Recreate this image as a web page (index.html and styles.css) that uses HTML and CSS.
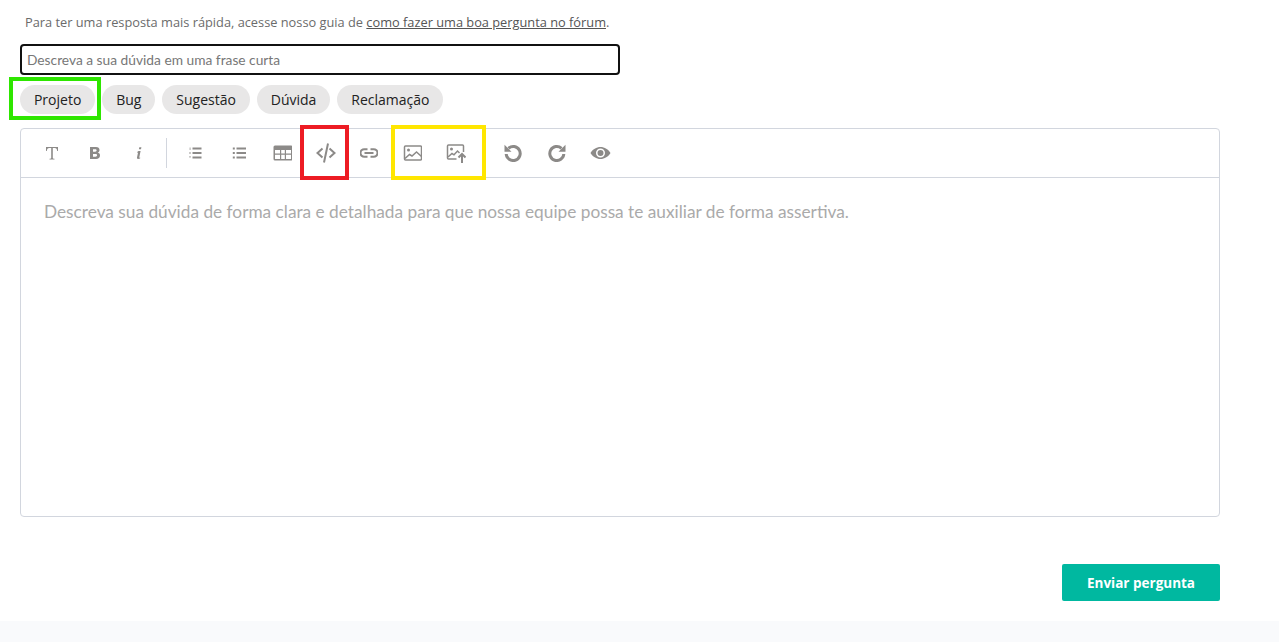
FILE: index.html
```html
<!DOCTYPE html>
<html lang="pt-BR">
<head>
<meta charset="utf-8">
<title>Enviar pergunta</title>
<link rel="stylesheet" href="styles.css">
</head>
<body>
<main class="page">
  <p class="intro">Para ter uma resposta mais rápida, acesse nosso guia de <a href="#">como fazer uma boa pergunta no fórum</a>.</p>
  <input class="title-input" type="text" placeholder="Descreva a sua dúvida em uma frase curta">
  <div class="chips">
    <button class="chip">Projeto</button>
    <button class="chip">Bug</button>
    <button class="chip">Sugestão</button>
    <button class="chip">Dúvida</button>
    <button class="chip">Reclamação</button>
  </div>
  <section class="editor">
    <div class="toolbar">
      <button class="tool"><svg width="16" height="16" viewBox="0 0 16 16"><path class="fill" d="M2 2h12v4h-.8c-.2-1.600-.8-2.900-2.400-2.900H8.800v9.700c0 .8.500 1 1.700 1v.7H5.500v-.7c1.200 0 1.700-.2 1.700-1V3.100H5.200C3.600 3.100 3 4.400 2.800 6H2z"/></svg></button>
      <button class="tool"><svg width="16" height="16" viewBox="0 0 16 16"><path class="fill" fill-rule="evenodd" d="M3 2h6c2.300 0 3.500 1.200 3.500 3 0 1.300-.7 2.200-1.800 2.600 1.500.4 2.300 1.400 2.300 2.900 0 2.200-1.500 3.500-4 3.500H3zm3 2.300v2.400h2.200c.9 0 1.400-.5 1.400-1.200s-.5-1.200-1.400-1.200zm0 4.600v2.800h2.500c1 0 1.600-.5 1.600-1.400s-.6-1.400-1.600-1.400z"/></svg></button>
      <button class="tool"><svg width="16" height="16" viewBox="0 0 16 16"><path class="fill" d="M8.300 2.300h2.100l-.4 2H7.900zM7.500 6h2.100l-1.300 6.200c-.1.500.2.600.9.400l-.1.900c-.8.300-1.400.4-2 .4-.9 0-1.300-.5-1.100-1.400l1-4.800-.9-.2.100-.5z"/></svg></button>
      <span class="divider"></span>
      <button class="tool"><svg width="16" height="16" viewBox="0 0 16 16"><path class="fill" d="M5.500 2.500h9v2h-9zm0 4.500h9v2h-9zm0 4.500h9v2h-9z"/><path class="fill" opacity=".6" d="M2.500 2.500h1.200v2.400H2.500zM2 7h2v.8H2zm0 1.300h2v.8H2zm0 3h2v.6H2zm0 1.100h2v.7H2z"/></svg></button>
      <button class="tool"><svg width="16" height="16" viewBox="0 0 16 16"><path class="fill" d="M5.500 2.500H15v2H5.500zm0 4.500H15v2H5.500zm0 4.500H15v2H5.500z"/><rect class="fill" x="1.800" y="2.500" width="2" height="2"/><rect class="fill" x="1.800" y="7" width="2" height="2"/><rect class="fill" x="1.800" y="11.500" width="2" height="2"/></svg></button>
      <button class="tool"><svg width="19" height="16" viewBox="-.5 0 19 16"><path class="fill" fill-rule="evenodd" d="M1.500.5h16a1.500 1.500 0 0 1 1.500 1.500v12a1.500 1.500 0 0 1-1.500 1.500h-16A1.500 1.500 0 0 1 0 14V2A1.500 1.500 0 0 1 1.500.5zM1.500 5v3.500h5V5zm6.200 0v3.500h3.600V5zm4.800 0v3.500h5V5zM1.500 9.700V14h5V9.700zm6.200 0V14h3.600V9.700zm4.800 0V14h5V9.700z"/></svg></button>
      <button class="tool"><svg width="20" height="20" viewBox="0 0 20 20"><path class="line" d="M6.500 5.500 1.500 10l5 4.500M13.500 5.500l5 4.500-5 4.500M12 .5 8 19.500"/></svg></button>
      <button class="tool"><svg width="18" height="10" viewBox="0 0 18 10"><path class="line" d="M7.500 1.200H4.300a3.800 3.800 0 0 0 0 7.600h3.200M10.500 1.200h3.200a3.800 3.800 0 0 1 0 7.600h-3.200M4.500 5h9"/></svg></button>
      <button class="tool"><svg width="19" height="16" viewBox="-.5 0 19 16"><rect class="line mid" x="1" y="1" width="17" height="14" rx="1"/><circle class="fill" cx="5" cy="5" r="1.500"/><path class="line mid" d="M1.500 13.500 6 9.500l2.500 1.500L13 7l5 4.500"/></svg></button>
      <button class="tool"><svg width="20" height="20" viewBox="-.5 -1 20 20"><path class="line mid" d="M10 15H2a1 1 0 0 1-1-1V2a1 1 0 0 1 1-1h14a1 1 0 0 1 1 1v6"/><circle class="fill" cx="5" cy="5" r="1.500"/><path class="line mid" d="M1.500 13 5.500 9.500l2 1.300L11 7l2 2"/><path class="line" d="M15.500 19v-8.500M12 13.500l3.500-3.500 3.500 3.500"/></svg></button>
      <span class="tool-gap"></span>
      <button class="tool"><svg width="18" height="18" viewBox="0 0 18 18"><path class="arc" d="M4.500 4.300a7 7 0 1 1-2.300 5.700"/><path class="fill" d="M.5.800v7h7z"/></svg></button>
      <button class="tool"><svg width="18" height="18" viewBox="0 0 18 18"><path class="arc" d="M13.500 4.300a7 7 0 1 0 2.300 5.700"/><path class="fill" d="M17.500.8v7h-7z"/></svg></button>
      <button class="tool"><svg width="21" height="14" viewBox="0 0 21 14"><path class="fill" fill-rule="evenodd" d="M10.500 1c4 0 8 2.500 10 6-2 3.500-6 6-10 6S2.500 10.500.5 7c2-3.500 6-6 10-6zm0 1.500a4.500 4.500 0 1 0 0 9 4.500 4.500 0 0 0 0-9zm0 1.500a3 3 0 1 1 0 6 3 3 0 0 1 0-6z"/></svg></button>
    </div>
    <div class="editor-body">Descreva sua dúvida de forma clara e detalhada para que nossa equipe possa te auxiliar de forma assertiva.</div>
  </section>
  <div class="actions"><button class="submit">Enviar pergunta</button></div>
  <span class="mark mark-green"></span>
  <span class="mark mark-red"></span>
  <span class="mark mark-yellow"></span>
</main>
<footer class="band"></footer>
</body>
</html>
```

FILE: styles.css
```css
* { box-sizing: border-box; }
html, body { margin: 0; padding: 0; }
body { background: #fff; font-family: "Open Sans", sans-serif; height: 642px; overflow: hidden; }
.page { position: relative; height: 621px; padding: 0 59px 0 20px; display: flex; flex-direction: column; }
.intro { margin: 14px 0 13px 5px; font-size: 12.8px; line-height: 17px; color: #6b6b6b; }
.intro a { color: #555; text-decoration: underline; }
.title-input { display: block; width: 600px; height: 31px; padding: 0 5px; border: 2px solid #111; border-radius: 4px; background: #fff; font-family: "Lato", sans-serif; font-size: 13.75px; outline: none; }
.title-input::placeholder { color: #777; opacity: 1; }
.chips { display: flex; gap: 7px; margin-top: 10px; }
.chip { height: 29px; padding: 0 13.95px; border: 0; border-radius: 15px; background: #e8e7e7; font-family: "Open Sans", sans-serif; font-size: 14px; color: #222; }
.editor { margin-top: 14px; height: 389px; border: 1px solid #d2d6de; border-radius: 4px; display: flex; flex-direction: column; }
.toolbar { height: 49px; flex: none; border-bottom: 1px solid #d2d6de; display: flex; align-items: center; padding-left: 9px; }
.tool { width: 43.5px; height: 30px; flex: none; padding: 0; border: 0; background: none; display: flex; align-items: center; justify-content: center; }
.fill { fill: #8c8a88; }
.line { fill: none; stroke: #8c8a88; stroke-width: 2; }
.line.mid { stroke-width: 1.5; }
.arc { fill: none; stroke: #8c8a88; stroke-width: 3; }
.divider { width: 1px; height: 30px; margin: 0 7px 0 5px; background: #d2d6de; flex: none; }
.tool-gap { width: 13.5px; flex: none; }
.editor-body { padding: 23px 22px 23px 23px; font-family: "Lato", sans-serif; font-size: 17.25px; line-height: 22px; color: #aaa; }
.actions { display: flex; justify-content: flex-end; margin-top: 47px; }
.submit { width: 158px; height: 37px; border: 0; border-radius: 2px; background: #00b8a0; color: #fff; font-family: "Open Sans", sans-serif; font-size: 13.5px; font-weight: 700; }
.band { height: 21px; background: #f9fafc; }
.mark { position: absolute; border-style: solid; border-width: 4px; pointer-events: none; }
.mark-green { left: 9px; top: 77px; width: 92px; height: 43px; border-color: #2ee600; }
.mark-red { left: 300px; top: 125px; width: 49px; height: 55px; border-color: #ed1c24; }
.mark-yellow { left: 391px; top: 125px; width: 95px; height: 55px; border-color: #ffe600; }
```
